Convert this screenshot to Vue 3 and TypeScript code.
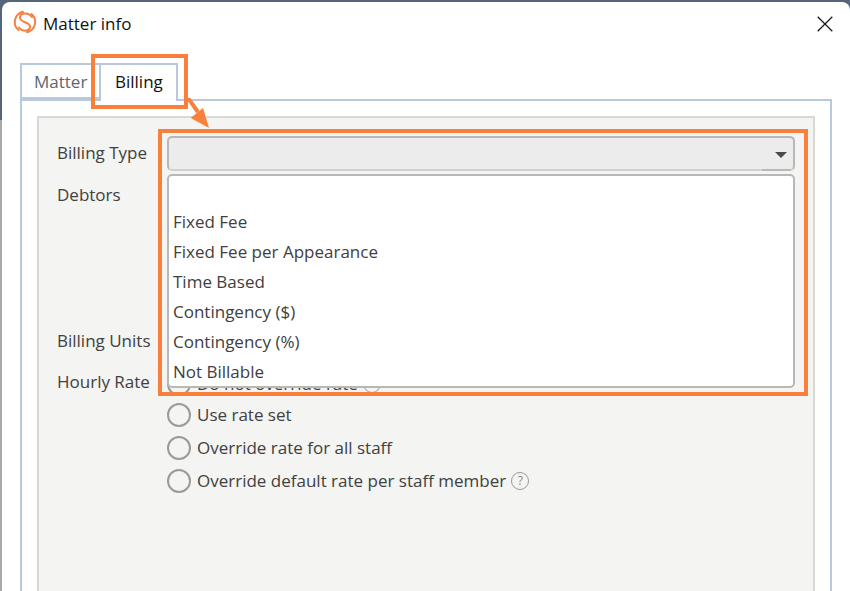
<script setup lang="ts">
const options: string[] = ['Fixed Fee', 'Fixed Fee per Appearance', 'Time Based', 'Contingency ($)', 'Contingency (%)', 'Not Billable']
const rates = [
  { label: 'Do not override rate', help: true },
  { label: 'Use rate set', help: false },
  { label: 'Override rate for all staff', help: false },
  { label: 'Override default rate per staff member', help: true },
]
</script>

<template>
  <div class="desktop">
    <div class="window">
      <header class="titlebar">
        <svg class="logo" viewBox="0 0 24 24" width="24" height="24" fill="none" stroke="#f58240" stroke-width="2" stroke-linecap="round">
          <path d="M10 1.800A10.500 10.500 0 0 0 5.500 20" />
          <path d="M14 22.200A10.500 10.500 0 0 0 18.500 4" />
          <path d="M19 7C15 1.500 6.500 3 7 8c.5 5 9.500 3.500 10 8.500.5 4.500-7.500 6-11 1" />
        </svg>
        <span class="title">Matter info</span>
        <svg class="close" viewBox="0 0 16 16" width="16" height="16" stroke="#1a1a1a" stroke-width="1.300"><path d="M.7.7l14.600 14.600M15.300.7L.7 15.300" /></svg>
      </header>

      <nav class="tabs">
        <div class="tab">Matter</div>
        <div class="tab active">Billing</div>
      </nav>

      <main class="tabpanel">
        <section class="panel">
          <div class="row row-type">
            <label>Billing Type</label>
            <div class="combo"><i class="caret"></i></div>
          </div>
          <div class="row row-debtors"><label>Debtors</label></div>
          <div class="row row-units"><label>Billing Units</label></div>
          <div class="row row-rate">
            <label>Hourly Rate</label>
            <div class="radios">
              <div v-for="r in rates" :key="r.label" class="radio">
                <span class="dot"></span>
                <span>{{ r.label }}</span>
                <span v-if="r.help" class="help">?</span>
              </div>
            </div>
          </div>

          <ul class="dropdown">
            <li class="blank"></li>
            <li v-for="o in options" :key="o">{{ o }}</li>
          </ul>
        </section>
      </main>
    </div>

    <div class="callout callout-tab"></div>
    <div class="callout callout-field"></div>
    <svg class="arrow" width="40" height="40" viewBox="0 0 40 40" fill="#f9803c">
      <path d="M1 0L11 14" stroke="#f9803c" stroke-width="4" />
      <path d="M3.700 20L16 10L22 30Z" />
    </svg>
  </div>
</template>

<style>
html, body { margin: 0; padding: 0; background: #fff; overflow: hidden; }
</style>

<style scoped>
.desktop {
  position: relative;
  width: 850px;
  height: 591px;
  overflow: hidden;
  box-sizing: border-box;
  padding: 2px 0 0 2px;
  background: linear-gradient(#56657a 0 120px, #a9a9a9 120px);
  font-family: "Open Sans", "Noto Sans", sans-serif;
  color: #404040;
}
.window {
  height: 589px;
  background: #fff;
  border-radius: 8px 8px 0 0;
  display: flex;
  flex-direction: column;
}
.titlebar {
  height: 43px;
  display: flex;
  align-items: center;
  padding: 0 17px 0 11px;
  flex: none;
}
.logo { margin-right: 6px; margin-top: -3px; }
.title { font-size: 17px; color: #111; margin-top: -1px; }
.close { margin-left: auto; margin-top: 0; }
.tabs {
  display: flex;
  margin: 18px 0 0 18px;
  height: 36px;
  flex: none;
  position: relative;
  z-index: 1;
}
.tab {
  box-sizing: border-box;
  width: 79px;
  height: 36px;
  padding: 3px 0 0 12px;
  font-size: 17px;
  line-height: 28px;
  color: #5c6770;
  border: 2px solid #b9c9dc;
  border-right: 0;
}
.tab.active {
  height: 38px;
  color: #111;
  background: #fff;
  border-right: 2px solid #b9c9dc;
  border-bottom: 0;
  padding-left: 14px;
}
.tabpanel {
  flex: 1;
  margin: 0 18px 0 18px;
  border: 2px solid #b9c9dc;
  border-bottom: 0;
  padding: 15px 15px 0;
  min-height: 0;
}
.panel {
  position: relative;
  height: 100%;
  box-sizing: border-box;
  background: #f4f4f2;
  border: 2px solid #d8d8d6;
  border-bottom: 0;
  padding: 18px 18px 0 18px;
  font-size: 17px;
}
.row { display: flex; }
.row label { width: 110px; flex: none; line-height: 34px; }
.row-type { height: 35px; }
.row-debtors { margin-top: 7px; height: 146px; }
.row-units { height: 41px; }
.row-rate { height: 200px; }
.combo {
  position: relative;
  width: 628px;
  height: 35px;
  box-sizing: border-box;
  background: #ececec;
  border: 2px solid #b8b8b6;
  border-bottom-color: #d0d0ce;
  border-radius: 5px;
}
.combo::after {
  content: "";
  position: absolute;
  right: 2px;
  bottom: -2px;
  width: 29px;
  height: 2px;
  background: #b8b8b6;
}
.caret {
  position: absolute;
  right: 6px;
  top: 14px;
  border: 6px solid transparent;
  border-top: 6px solid #4a4a4a;
  border-bottom: 0;
}
.radios { margin-top: 4px; }
.radio {
  display: flex;
  align-items: center;
  height: 33px;
  white-space: nowrap;
}
.radio:first-child { height: 29px; }
.dot {
  flex: none;
  width: 24px;
  height: 24px;
  box-sizing: border-box;
  border: 2px solid #9a9a9a;
  border-radius: 50%;
  background: #f4f4f2;
  margin-right: 6px;
}
.help {
  width: 18px;
  height: 18px;
  box-sizing: border-box;
  border: 1.500px solid #9a9a9a;
  border-radius: 50%;
  margin-left: 5px;
  font-size: 12px;
  line-height: 15px;
  text-align: center;
  color: #8a8a8a;
}
.dropdown {
  position: absolute;
  left: 128px;
  top: 56px;
  width: 628px;
  height: 214px;
  box-sizing: border-box;
  margin: 0;
  padding: 0 0 0 4px;
  list-style: none;
  background: #fff;
  border: 2px solid #b8b8b6;
  border-radius: 5px;
  z-index: 2;
}
.dropdown li { height: 30px; line-height: 30px; }
.dropdown li.blank { height: 31px; }
.callout {
  position: absolute;
  box-sizing: border-box;
  border: 4px solid #f9803c;
  z-index: 3;
}
.callout-tab { left: 91px; top: 54px; width: 97px; height: 55px; }
.callout-field { left: 158px; top: 129px; width: 650px; height: 267px; }
.arrow { position: absolute; left: 187px; top: 98px; z-index: 3; }
</style>
